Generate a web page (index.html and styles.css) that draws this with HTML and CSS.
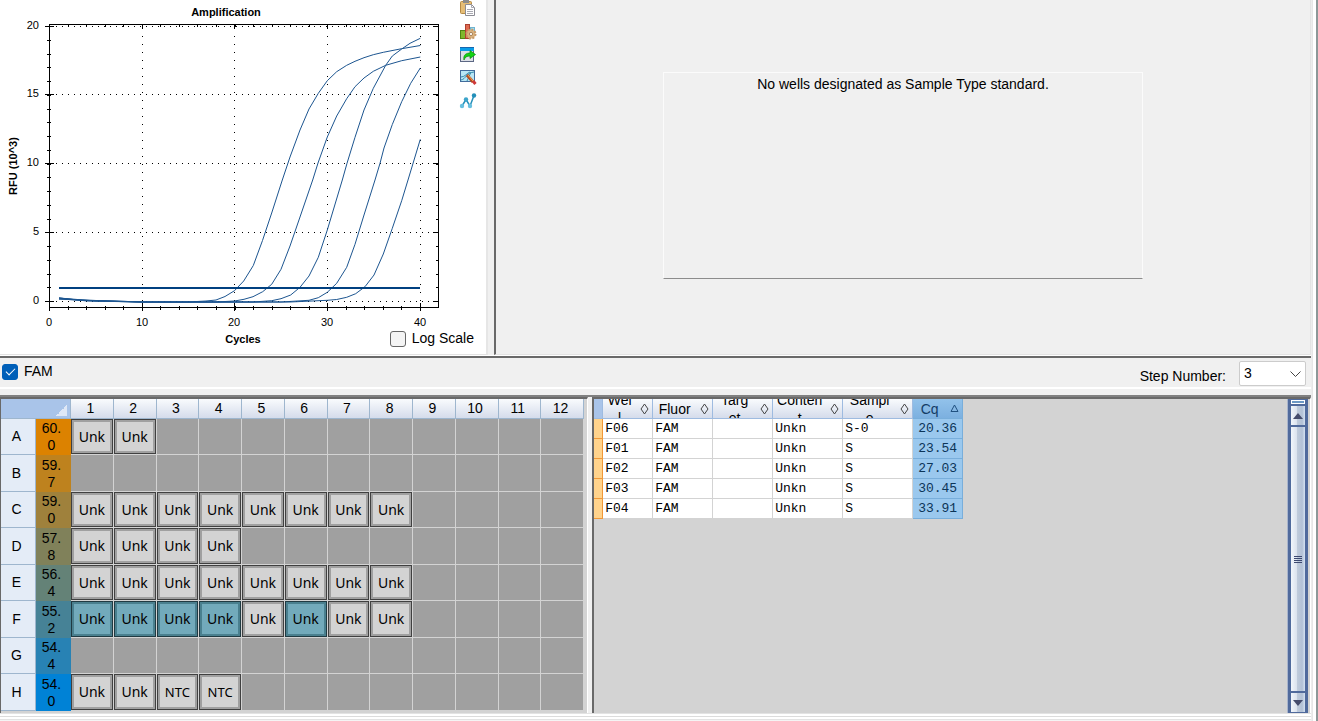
FILE: index.html
```html
<!DOCTYPE html>
<html lang="en">
<head>
<meta charset="utf-8">
<title>Quantification</title>
<link rel="stylesheet" href="styles.css">
</head>
<body>
<div class="window">
  <div class="top">
    <section class="chart-panel">
      <svg class="chart" width="456" height="352" viewBox="0 0 456 352" role="img" aria-label="Amplification">
        <g class="grid">
          <path class="dots-h" d="M50 26.5H438M50 94.5H438M50 163.5H438M50 232.5H438M50 301.5H438"/>
          <path class="dots-v" d="M142.5 28V307M234.5 28V307M327.5 28V307M420.5 28V307"/>
        </g>
        <g class="axis">
          <rect x="49.5" y="24.5" width="389" height="283"/>
          <path d="M45 26.5h9M45 94.5h9M45 163.5h9M45 232.5h9M45 301.5h9M433 26.5h6M433 94.5h6M433 163.5h6M433 232.5h6M433 301.5h6"/>
          <path d="M49.5 303v8M142.5 303v8M234.5 303v8M327.5 303v8M420.5 303v8M142.5 24v5M234.5 24v5M327.5 24v5M420.5 24v5"/>
        </g>
        <g class="ticks">
          <path stroke-width="4" stroke-dasharray="1 17.55" d="M49 308H438"/>
          <path stroke-width="3" stroke-dasharray="1 17.55" d="M49 25.500H438"/>
          <path stroke-width="4" stroke-dasharray="1 12.75" d="M49 302V26"/>
          <path stroke-width="3" stroke-dasharray="1 12.75" d="M437.500 302V26"/>
        </g>
        <g class="curves">
          <path d="M59 298L78 300L114 301L142 302L188 302L206 301L216 300L225 296.500L234.500 290.700L243.700 281L253.300 265.500L262.500 240.500L271.700 213L282.300 180L290 157L300 130L309 109L318.300 93.300L327.300 80.700L336.700 71.700L346.700 65.300L355 61.300L364 57.700L373.300 54.700L383.300 52.300L401.700 48.700L420.300 45.500"/>
          <path d="M59 299L78 300L114 301L142 302L216 302L234.500 301L244 299.300L253 296.700L262.700 291.700L271.700 284.300L281 269.300L290 246L300 217L312.700 180L318 163L327.300 137L336.700 116L346.700 98.700L355 86.700L364 78L373.300 71.300L385.700 65.300L401.700 60.700L420.300 57"/>
          <path d="M59 298L96 301L142 302L253 302L271.700 300.700L281 298.700L290.700 295L300 287.300L309 276L318.300 257.300L327.300 230L342.300 180L347 163.300L355 137.300L364 110L373.300 88.300L385.700 65.300L392.300 56L401.700 49L410 43.300L420.300 38.300"/>
          <path d="M59 299L96 301L142 302L281 302L309 300.300L318.300 297.700L327.300 292.300L336.700 283.300L346.700 267.300L355 244.300L364 215L375 180L380 163.300L384 148L392.300 124.500L401.700 101.700L410.700 83.300L420.300 68"/>
          <path d="M59 298L87 301L142 302L290 302L327.300 300.300L336.700 299.500L346.700 297.300L355.700 293.700L365 286.700L374 275L383.300 254L392.300 228.300L401.700 200.700L408 180L420.300 139.300"/>
        </g>
        <path class="threshold" d="M59 288H420"/>
        <g class="scale">
          <text x="39" y="29" text-anchor="end">20</text>
          <text x="39" y="97" text-anchor="end">15</text>
          <text x="39" y="166" text-anchor="end">10</text>
          <text x="39" y="235" text-anchor="end">5</text>
          <text x="39" y="304" text-anchor="end">0</text>
          <text x="49" y="326" text-anchor="middle">0</text>
          <text x="142" y="326" text-anchor="middle">10</text>
          <text x="234" y="326" text-anchor="middle">20</text>
          <text x="327" y="326" text-anchor="middle">30</text>
          <text x="420" y="326" text-anchor="middle">40</text>
        </g>
        <g class="captions">
          <text x="226" y="16" text-anchor="middle">Amplification</text>
          <text x="243" y="343" text-anchor="middle">Cycles</text>
          <text transform="translate(17 166) rotate(-90)" text-anchor="middle">RFU (10^3)</text>
        </g>
      </svg>
      <div class="tools">
        <button type="button" aria-label="Copy"><svg width="18" height="18" viewBox="0 1 18 18"><rect x="1.500" y="2.500" width="11" height="12" rx="1" fill="#e5bd76" stroke="#b58a45"/><rect x="4" y="1" width="6" height="3" fill="#8c8c8c"/><path d="M6.500 5.500h6l3 3v8h-9z" fill="#fff" stroke="#8c8c94"/><path d="M12.500 5.500v3h3M8 10.500h6M8 12.500h6M8 14.500h6" fill="none" stroke="#a9a9b2"/></svg></button>
        <button type="button" aria-label="Chart settings"><svg width="18" height="18" viewBox="0 1 18 18"><rect x="1.500" y="8.500" width="5" height="8" fill="#80b82c" stroke="#4f8612"/><rect x="6.500" y="2.500" width="4" height="14" fill="#e06a50" stroke="#ac4030"/><rect x="11.500" y="5.500" width="4" height="6" fill="#a4dcf0" stroke="#70b4d0"/><circle cx="12" cy="12" r="4.500" fill="#dab27e" stroke="#c79a68" stroke-width="2" stroke-dasharray="2 1.500"/><circle cx="12" cy="12" r="1.600" fill="#fff" stroke="#a8835a"/></svg></button>
        <button type="button" aria-label="Export"><svg width="18" height="18" viewBox="0 1 18 18"><rect x="1.500" y="2.500" width="13" height="14" fill="#dcdfe6" stroke="#5c6784"/><rect x="1" y="2" width="14" height="4" fill="#0a9de8"/><path d="M1 2.500h14" stroke="#1766ae"/><path d="M5 15c-1-5 2-7 6-7V5.500l5.500 4L11 13.500V11c-3 0-5 1-6 4z" fill="#14d414" stroke="#07890d" stroke-width=".7"/></svg></button>
        <button type="button" aria-label="Edit chart"><svg width="18" height="18" viewBox="0 1 18 18"><rect x="1.500" y="2.500" width="14" height="11" fill="#b9e7f5" stroke="#426c9c"/><path d="M2 12c5-1 5-7 13-8M2 9c4 0 6-4 9-5M8 13l4-9" fill="none" stroke="#378bac"/><path d="M8 7l6 7" stroke="#b54c22" stroke-width="3"/><path d="M9 7l5 6" stroke="#f4aa55"/><path d="M14 13l2.500 3" stroke="#cf3838" stroke-width="3"/></svg></button>
        <button type="button" aria-label="Trace options"><svg width="18" height="18" viewBox="0 0 18 18"><path d="M3 14L7 7.500L11 14L15 3.500" fill="none" stroke="#2690ba" stroke-width="1.500"/><circle cx="3" cy="14" r="2.200" fill="#67bfdf"/><circle cx="7" cy="7.500" r="2.200" fill="#3ca4ca"/><circle cx="11" cy="14" r="2.200" fill="#67bfdf"/><circle cx="15" cy="3.500" r="2.200" fill="#238fb9"/></svg></button>
      </div>
      <label class="check log"><input type="checkbox">Log Scale</label>
    </section>
    <section class="standard-panel">
      <div class="notice">No wells designated as Sample Type standard.</div>
    </section>
  </div>

  <div class="options">
    <label class="check"><input type="checkbox" checked>FAM</label>
    <div class="step">
      <label for="step">Step Number:</label>
      <div class="select">
        <select id="step"><option>3</option></select>
        <svg class="chevron" width="11" height="6" viewBox="0 0 11 6"><path d="M.5 .5L5.500 5.500L10.500 .5"/></svg>
      </div>
    </div>
  </div>

  <div class="bottom">
    <section class="plate-panel">
      <table class="plate">
        <colgroup><col class="side"><col class="side"><col span="12"></colgroup>
        <thead>
          <tr><th class="corner" colspan="2"></th><th>1</th><th>2</th><th>3</th><th>4</th><th>5</th><th>6</th><th>7</th><th>8</th><th>9</th><th>10</th><th>11</th><th>12</th></tr>
        </thead>
        <tbody>
          <tr><th>A</th><td class="temp t1">60.<br>0</td><td><span class="well">Unk</span></td><td><span class="well">Unk</span></td><td></td><td></td><td></td><td></td><td></td><td></td><td></td><td></td><td></td><td></td></tr>
          <tr><th>B</th><td class="temp t2">59.<br>7</td><td></td><td></td><td></td><td></td><td></td><td></td><td></td><td></td><td></td><td></td><td></td><td></td></tr>
          <tr><th>C</th><td class="temp t3">59.<br>0</td><td><span class="well">Unk</span></td><td><span class="well">Unk</span></td><td><span class="well">Unk</span></td><td><span class="well">Unk</span></td><td><span class="well">Unk</span></td><td><span class="well">Unk</span></td><td><span class="well">Unk</span></td><td><span class="well">Unk</span></td><td></td><td></td><td></td><td></td></tr>
          <tr><th>D</th><td class="temp t4">57.<br>8</td><td><span class="well">Unk</span></td><td><span class="well">Unk</span></td><td><span class="well">Unk</span></td><td><span class="well">Unk</span></td><td></td><td></td><td></td><td></td><td></td><td></td><td></td><td></td></tr>
          <tr><th>E</th><td class="temp t5">56.<br>4</td><td><span class="well">Unk</span></td><td><span class="well">Unk</span></td><td><span class="well">Unk</span></td><td><span class="well">Unk</span></td><td><span class="well">Unk</span></td><td><span class="well">Unk</span></td><td><span class="well">Unk</span></td><td><span class="well">Unk</span></td><td></td><td></td><td></td><td></td></tr>
          <tr><th>F</th><td class="temp t6">55.<br>2</td><td><span class="well on">Unk</span></td><td><span class="well on">Unk</span></td><td><span class="well on">Unk</span></td><td><span class="well on">Unk</span></td><td><span class="well">Unk</span></td><td><span class="well on">Unk</span></td><td><span class="well">Unk</span></td><td><span class="well">Unk</span></td><td></td><td></td><td></td><td></td></tr>
          <tr><th>G</th><td class="temp t7">54.<br>4</td><td></td><td></td><td></td><td></td><td></td><td></td><td></td><td></td><td></td><td></td><td></td><td></td></tr>
          <tr><th>H</th><td class="temp t8">54.<br>0</td><td><span class="well">Unk</span></td><td><span class="well">Unk</span></td><td><span class="well ntc">NTC</span></td><td><span class="well ntc">NTC</span></td><td></td><td></td><td></td><td></td><td></td><td></td><td></td><td></td></tr>
        </tbody>
      </table>
    </section>
    <section class="data-panel">
      <div class="data-scroll">
        <table class="data">
          <colgroup><col class="c-mark"><col class="c-s"><col class="c-m"><col class="c-m"><col class="c-l"><col class="c-l"><col class="c-s"></colgroup>
          <thead>
            <tr>
              <th></th>
              <th><div class="head"><span>Wel<br>l</span><svg class="sort" width="9" height="12" viewBox="0 0 9 12"><path d="M4.500 1L8 6L4.500 11L1 6z"/></svg></div></th>
              <th><div class="head"><span>Fluor</span><svg class="sort" width="9" height="12" viewBox="0 0 9 12"><path d="M4.500 1L8 6L4.500 11L1 6z"/></svg></div></th>
              <th><div class="head"><span>Targ<br>et</span><svg class="sort" width="9" height="12" viewBox="0 0 9 12"><path d="M4.500 1L8 6L4.500 11L1 6z"/></svg></div></th>
              <th><div class="head"><span>Conten<br>t</span><svg class="sort" width="9" height="12" viewBox="0 0 9 12"><path d="M4.500 1L8 6L4.500 11L1 6z"/></svg></div></th>
              <th><div class="head"><span>Sampl<br>e</span><svg class="sort" width="9" height="12" viewBox="0 0 9 12"><path d="M4.500 1L8 6L4.500 11L1 6z"/></svg></div></th>
              <th class="cq"><div class="head"><span>Cq</span><svg class="sort" width="9" height="12" viewBox="0 0 9 12"><path d="M4.500 2L8 8.500H1z"/></svg></div></th>
            </tr>
          </thead>
          <tbody>
            <tr><th></th><td>F06</td><td>FAM</td><td></td><td>Unkn</td><td>S-0</td><td class="cq">20.36</td></tr>
            <tr><th></th><td>F01</td><td>FAM</td><td></td><td>Unkn</td><td>S</td><td class="cq">23.54</td></tr>
            <tr><th></th><td>F02</td><td>FAM</td><td></td><td>Unkn</td><td>S</td><td class="cq">27.03</td></tr>
            <tr><th></th><td>F03</td><td>FAM</td><td></td><td>Unkn</td><td>S</td><td class="cq">30.45</td></tr>
            <tr><th></th><td>F04</td><td>FAM</td><td></td><td>Unkn</td><td>S</td><td class="cq">33.91</td></tr>
          </tbody>
        </table>
      </div>
      <div class="scrollbar">
        <div class="split"></div>
        <button type="button" aria-label="Scroll up"><svg width="10" height="6" viewBox="0 0 10 6"><path d="M5 0L10 6H0z"/></svg></button>
        <div class="thumb"><i></i></div>
        <button type="button" aria-label="Scroll down"><svg width="10" height="6" viewBox="0 0 10 6"><path d="M0 0H10L5 6z"/></svg></button>
      </div>
    </section>
  </div>
  <div class="footer"></div>
</div>
</body>
</html>
```
FILE: styles.css
```css
* { box-sizing: border-box; }

body {
  margin: 0;
  font: 14px/17px "Liberation Sans", Arial, sans-serif;
  color: #000;
  background: #f0f0f0;
}

.window {
  display: flex;
  flex-direction: column;
  min-height: 100vh;
  padding-right: 5px;
  border-right: 2px solid #8d9898;
  background: linear-gradient(to left, #fff 3px, #e3e3e3 3px, #f0f0f0 5px);
}

button { padding: 0; border: 0; background: none; }

/* upper half */
.top {
  display: grid;
  grid-template-columns: minmax(488px, 37fr) 63fr;
  column-gap: 6px;
  border-bottom: 1px solid #fff;
}

.chart-panel {
  display: grid;
  grid-template-columns: 1fr 30px;
  min-height: 355px;
  border-right: 2px solid #e6e6e6;
  border-bottom: 1px solid #e3e3e3;
  background: #fff;
}

.chart { display: block; font-size: 11px; grid-row: 1; grid-column: 1; }
.grid path { stroke: #000; shape-rendering: crispEdges; }
.dots-h { stroke-dasharray: 1 5; }
.dots-v { stroke-dasharray: 1 7; }
.axis { fill: none; stroke: #000; shape-rendering: crispEdges; }
.ticks { fill: none; stroke: #000; shape-rendering: crispEdges; }
.curves { fill: none; stroke: #1c5590; stroke-width: 1; }
.threshold { stroke: #004080; stroke-width: 2; shape-rendering: crispEdges; }
.captions { font-weight: bold; }

.tools {
  display: flex;
  flex-direction: column;
  gap: 5px;
  grid-row: 1;
  grid-column: 2;
  padding-left: 3px;
}
.tools button { display: block; width: 18px; height: 18px; }
.tools svg { display: block; }

.check { display: flex; align-items: center; gap: 6px; }
.check input {
  appearance: none;
  width: 16px;
  height: 16px;
  margin: 0;
  border: 1px solid #666;
  border-radius: 3px;
  background: #f4f4f4;
}
.check input:checked {
  border-color: #005fb8;
  background: #005fb8;
  display: grid;
  place-items: center;
}
.check input:checked::before {
  content: "";
  width: 8px;
  height: 4px;
  border: solid #fff;
  border-width: 0 0 1px 1px;
  transform: rotate(-45deg);
  margin-bottom: 3px;
}
.log {
  grid-row: 1;
  grid-column: 1 / 3;
  place-self: end;
  padding: 0 12px 7px 0;
}

.standard-panel {
  display: grid;
  place-items: center;
  padding-bottom: 4px;
  border-left: 2px solid #696969;
  border-right: 1px solid #e3e3e3;
  border-bottom: 1px solid #e3e3e3;
}
.notice {
  width: 59%;
  height: 207px;
  padding-top: 3px;
  text-align: center;
  border: 1px solid #fff;
  border-color: #fbfbfb #fbfbfb #8c8c8c #fbfbfb;
}

/* options bar */
.options {
  display: flex;
  justify-content: space-between;
  height: 33px;
  padding: 0 5px 0 2px;
  border-top: 2px solid #696969;
  border-bottom: 2px solid #fff;
}
.options > .check { align-self: start; padding-top: 5px; }
.step { display: flex; gap: 13px; padding-top: 3px; }
.step label { padding-top: 7px; }
.select { display: grid; align-items: center; height: 25px; }
.select > * { grid-area: 1 / 1; }
.step select {
  appearance: none;
  width: 67px;
  height: 25px;
  padding: 0 4px;
  border: 1px solid #ccc;
  border-radius: 2px;
  font: inherit;
  color: #000;
  background: #fff;
}
.chevron {
  justify-self: end;
  margin-right: 5px;
  fill: none;
  stroke: #444;
  pointer-events: none;
}

/* lower half */
.bottom {
  display: grid;
  grid-template-columns: minmax(587px, 45fr) 55fr;
  column-gap: 4px;
  flex: 1;
  margin-top: 6px;
  border-top: 2px solid #808080;
}
.plate-panel {
  border: 1px solid #696969;
  border-width: 2px 1px 0 1px;
  border-right-color: #fff;
  background: #d3d3d3;
}

table { border-collapse: separate; border-spacing: 0; table-layout: fixed; }
th { padding: 0; font-weight: normal; }
td { padding: 0; }

.plate { width: 583px; }
.plate th { padding-right: 3px; }
.side { width: 35px; }
.plate thead th {
  height: 20px;
  border-right: 1px solid #9eb6ce;
  border-bottom: 1px solid #9eb6ce;
  background: linear-gradient(#f9fbfd, #d5dceb);
}
.plate thead .corner {
  background: linear-gradient(135deg, transparent 50%, #dfe8f6 50%) right 3px bottom 2px / 11px 11px no-repeat, #a9c4e9;
}
.plate tbody th {
  border-right: 1px solid #9eb6ce;
  border-bottom: 1px solid #9eb6ce;
  background: #e4ecf7;
}
.plate tbody tr { height: 36px; }
.plate tbody tr:nth-child(even) { height: 37px; }
.plate td {
  height: inherit;
  border-right: 1px solid #d3d3d3;
  border-bottom: 1px solid #d3d3d3;
  text-align: center;
  background: #a0a0a0;
}
.plate .temp { padding-right: 4px; border: 0; }
.plate .t1 { background: #dc8200; }
.plate .t2 { background: #be821e; }
.plate .t3 { background: #9f813c; }
.plate .t4 { background: #80815a; }
.plate .t5 { background: #648277; }
.plate .t6 { background: #468296; }
.plate .t7 { background: #2882b4; }
.plate .t8 { background: #0082d6; }
.well {
  display: flex;
  align-items: center;
  justify-content: center;
  height: 35px;
  border: 1px solid #404040;
  box-shadow: inset 0 0 0 2px #a0a0a0;
  font: 14px/20px "Noto Sans", sans-serif;
  background: #d3d3d3;
}
.plate tr:nth-child(even) .well { height: 36px; }
.well.on { background: #72aabb; border-color: #203a42; box-shadow: inset 0 0 0 2px #4a808f; }
.well.ntc { font-size: 13px; }

.data-panel {
  display: flex;
  border: 1px solid #696969;
  border-width: 2px 1px 0 2px;
  border-right-color: #fff;
  background: #d3d3d3;
}
.data-scroll { flex: 1; overflow: hidden; }
.data { width: 369px; }
.c-mark { width: 9px; }
.c-s { width: 50px; }
.c-m { width: 60px; }
.c-l { width: 70px; }
.data thead th {
  height: 20px;
  border-right: 1px solid #9ebbe0;
  border-bottom: 1px solid #9ebbe0;
  background: linear-gradient(#f9fbfd, #d5dceb);
}
.data thead th:first-child { background: #a9c4e9; }
.data thead .cq { background: linear-gradient(#92c2ea, #7cb0e0); color: #143c66; border-color: #78aedb; }
.head {
  display: flex;
  align-items: center;
  height: 19px;
  padding-right: 3px;
  overflow: hidden;
  line-height: 18px;
}
.head span { flex: 1; padding-right: 4px; text-align: center; }
.sort { fill: none; stroke: #444; flex: none; }
.data thead .cq .sort { stroke: #205080; }
.data tbody th {
  height: 20px;
  border-right: 1px solid #f09838;
  border-bottom: 1px solid #f09838;
  background: #ffd38c;
}
.data td {
  height: 20px;
  padding: 1px 0 0 2px;
  border-right: 1px solid #d3d3d3;
  border-bottom: 1px solid #d3d3d3;
  font: 13px/18px "Liberation Mono", monospace;
  background: #fff;
}
.data td.cq {
  padding: 1px 5px 0 0;
  text-align: right;
  color: #0c3558;
  background: #9ac8ee;
  border-color: #78aedb;
}

.scrollbar {
  display: flex;
  flex-direction: column;
  gap: 2px;
  width: 21px;
  margin-right: 2px;
  padding: 0 3px 1px;
  border-left: 1px solid #a8b4cc;
  background: #506a9c;
}
.split {
  height: 4px;
  margin-top: 1px;
  border: 1px solid #fff;
  background: #6c98c4;
}
.scrollbar button, .thumb {
  display: grid;
  place-items: center;
  background: linear-gradient(to right, #f2f6fb, #dce3ee 40%, #c0cbdb 45%, #b2c1d6 80%, #d5e2f2);
}
.scrollbar button { height: 19px; fill: #454c6c; }
.thumb { flex: 1; }
.thumb i {
  width: 8px;
  height: 7px;
  background: repeating-linear-gradient(#3c4870 0 1px, transparent 1px 2px);
}

.footer {
  height: 8px;
  border-top: 1px solid #e3e3e3;
  background: linear-gradient(#fff 2px, #dcdcdc 2px, #dcdcdc 3px, #fff 3px, #fff 5px, #e3e3e3 5px, #e3e3e3 6px, #f4f4f4 6px);
}
```
